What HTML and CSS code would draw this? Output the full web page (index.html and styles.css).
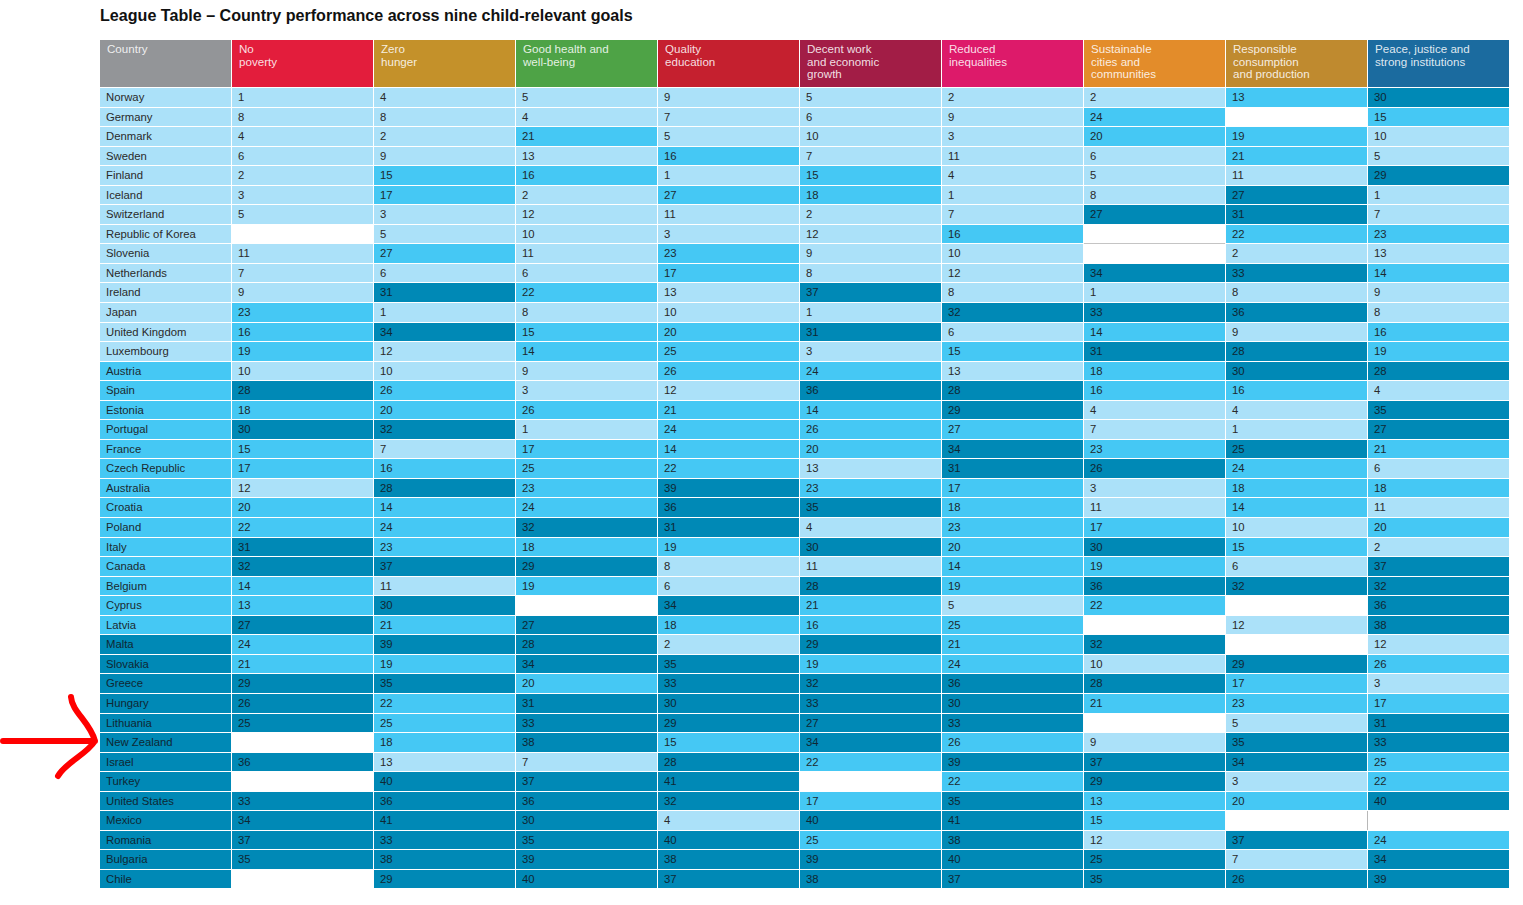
FILE: index.html
```html
<!DOCTYPE html>
<html lang="en">
<head>
<meta charset="utf-8">
<title>League Table</title>
<link rel="stylesheet" href="styles.css">
</head>
<body>
<div class="page">
  <h1 class="title">League Table – Country performance across nine child-relevant goals</h1>
  <div class="table">
    <div class="row head">
      <span class="h0">Country</span>
      <span class="h1">No<br>poverty</span>
      <span class="h2">Zero<br>hunger</span>
      <span class="h3">Good health and<br>well-being</span>
      <span class="h4">Quality<br>education</span>
      <span class="h5">Decent work<br>and economic<br>growth</span>
      <span class="h6">Reduced<br>inequalities</span>
      <span class="h7">Sustainable<br>cities and<br>communities</span>
      <span class="h8">Responsible<br>consumption<br>and production</span>
      <span class="h9">Peace, justice and<br>strong institutions</span>
    </div>
    <div class="row"><span class="l">Norway</span><span class="l">1</span><span class="l">4</span><span class="l">5</span><span class="l">9</span><span class="l">5</span><span class="l">2</span><span class="l">2</span><span class="m">13</span><span class="d">30</span></div>
    <div class="row"><span class="l">Germany</span><span class="l">8</span><span class="l">8</span><span class="l">4</span><span class="l">7</span><span class="l">6</span><span class="l">9</span><span class="m">24</span><span class="w"></span><span class="m">15</span></div>
    <div class="row"><span class="l">Denmark</span><span class="l">4</span><span class="l">2</span><span class="m">21</span><span class="l">5</span><span class="l">10</span><span class="l">3</span><span class="m">20</span><span class="m">19</span><span class="l">10</span></div>
    <div class="row"><span class="l">Sweden</span><span class="l">6</span><span class="l">9</span><span class="l">13</span><span class="m">16</span><span class="l">7</span><span class="l">11</span><span class="l">6</span><span class="m">21</span><span class="l">5</span></div>
    <div class="row"><span class="l">Finland</span><span class="l">2</span><span class="m">15</span><span class="m">16</span><span class="l">1</span><span class="m">15</span><span class="l">4</span><span class="l">5</span><span class="l">11</span><span class="d">29</span></div>
    <div class="row"><span class="l">Iceland</span><span class="l">3</span><span class="m">17</span><span class="l">2</span><span class="m">27</span><span class="m">18</span><span class="l">1</span><span class="l">8</span><span class="d">27</span><span class="l">1</span></div>
    <div class="row"><span class="l">Switzerland</span><span class="l">5</span><span class="l">3</span><span class="l">12</span><span class="l">11</span><span class="l">2</span><span class="l">7</span><span class="d">27</span><span class="d">31</span><span class="l">7</span></div>
    <div class="row"><span class="l">Republic of Korea</span><span class="w"></span><span class="l">5</span><span class="l">10</span><span class="l">3</span><span class="l">12</span><span class="m">16</span><span class="w rule-b"></span><span class="m">22</span><span class="m">23</span></div>
    <div class="row"><span class="l">Slovenia</span><span class="l">11</span><span class="m">27</span><span class="l">11</span><span class="m">23</span><span class="l">9</span><span class="l">10</span><span class="w"></span><span class="l">2</span><span class="l">13</span></div>
    <div class="row"><span class="l">Netherlands</span><span class="l">7</span><span class="l">6</span><span class="l">6</span><span class="m">17</span><span class="l">8</span><span class="l">12</span><span class="d">34</span><span class="d">33</span><span class="m">14</span></div>
    <div class="row"><span class="l">Ireland</span><span class="l">9</span><span class="d">31</span><span class="m">22</span><span class="l">13</span><span class="d">37</span><span class="l">8</span><span class="l">1</span><span class="l">8</span><span class="l">9</span></div>
    <div class="row"><span class="l">Japan</span><span class="m">23</span><span class="l">1</span><span class="l">8</span><span class="l">10</span><span class="l">1</span><span class="d">32</span><span class="d">33</span><span class="d">36</span><span class="l">8</span></div>
    <div class="row"><span class="l">United Kingdom</span><span class="m">16</span><span class="d">34</span><span class="m">15</span><span class="m">20</span><span class="d">31</span><span class="l">6</span><span class="m">14</span><span class="l">9</span><span class="m">16</span></div>
    <div class="row"><span class="l">Luxembourg</span><span class="m">19</span><span class="l">12</span><span class="m">14</span><span class="m">25</span><span class="l">3</span><span class="m">15</span><span class="d">31</span><span class="d">28</span><span class="m">19</span></div>
    <div class="row"><span class="m">Austria</span><span class="l">10</span><span class="l">10</span><span class="l">9</span><span class="m">26</span><span class="m">24</span><span class="l">13</span><span class="m">18</span><span class="d">30</span><span class="d">28</span></div>
    <div class="row"><span class="m">Spain</span><span class="d">28</span><span class="m">26</span><span class="l">3</span><span class="l">12</span><span class="d">36</span><span class="d">28</span><span class="m">16</span><span class="m">16</span><span class="l">4</span></div>
    <div class="row"><span class="m">Estonia</span><span class="m">18</span><span class="m">20</span><span class="m">26</span><span class="m">21</span><span class="m">14</span><span class="d">29</span><span class="l">4</span><span class="l">4</span><span class="d">35</span></div>
    <div class="row"><span class="m">Portugal</span><span class="d">30</span><span class="d">32</span><span class="l">1</span><span class="m">24</span><span class="m">26</span><span class="m">27</span><span class="l">7</span><span class="l">1</span><span class="d">27</span></div>
    <div class="row"><span class="m">France</span><span class="m">15</span><span class="l">7</span><span class="m">17</span><span class="m">14</span><span class="m">20</span><span class="d">34</span><span class="m">23</span><span class="d">25</span><span class="m">21</span></div>
    <div class="row"><span class="m">Czech Republic</span><span class="m">17</span><span class="m">16</span><span class="m">25</span><span class="m">22</span><span class="l">13</span><span class="d">31</span><span class="d">26</span><span class="m">24</span><span class="l">6</span></div>
    <div class="row"><span class="m">Australia</span><span class="l">12</span><span class="d">28</span><span class="m">23</span><span class="d">39</span><span class="m">23</span><span class="m">17</span><span class="l">3</span><span class="m">18</span><span class="m">18</span></div>
    <div class="row"><span class="m">Croatia</span><span class="m">20</span><span class="m">14</span><span class="m">24</span><span class="d">36</span><span class="d">35</span><span class="m">18</span><span class="l">11</span><span class="m">14</span><span class="l">11</span></div>
    <div class="row"><span class="m">Poland</span><span class="m">22</span><span class="m">24</span><span class="d">32</span><span class="d">31</span><span class="l">4</span><span class="m">23</span><span class="m">17</span><span class="l">10</span><span class="m">20</span></div>
    <div class="row"><span class="m">Italy</span><span class="d">31</span><span class="m">23</span><span class="m">18</span><span class="m">19</span><span class="d">30</span><span class="m">20</span><span class="d">30</span><span class="m">15</span><span class="l">2</span></div>
    <div class="row"><span class="m">Canada</span><span class="d">32</span><span class="d">37</span><span class="d">29</span><span class="l">8</span><span class="l">11</span><span class="m">14</span><span class="m">19</span><span class="l">6</span><span class="d">37</span></div>
    <div class="row"><span class="m">Belgium</span><span class="m">14</span><span class="l">11</span><span class="m">19</span><span class="l">6</span><span class="d">28</span><span class="m">19</span><span class="d">36</span><span class="d">32</span><span class="d">32</span></div>
    <div class="row"><span class="m">Cyprus</span><span class="m">13</span><span class="d">30</span><span class="w"></span><span class="d">34</span><span class="m">21</span><span class="l">5</span><span class="m">22</span><span class="w"></span><span class="d">36</span></div>
    <div class="row"><span class="m">Latvia</span><span class="d">27</span><span class="m">21</span><span class="d">27</span><span class="m">18</span><span class="m">16</span><span class="m">25</span><span class="w"></span><span class="l">12</span><span class="d">38</span></div>
    <div class="row"><span class="d">Malta</span><span class="m">24</span><span class="d">39</span><span class="d">28</span><span class="l">2</span><span class="d">29</span><span class="m">21</span><span class="d">32</span><span class="w"></span><span class="l">12</span></div>
    <div class="row"><span class="d">Slovakia</span><span class="m">21</span><span class="m">19</span><span class="d">34</span><span class="d">35</span><span class="m">19</span><span class="m">24</span><span class="l">10</span><span class="d">29</span><span class="m">26</span></div>
    <div class="row"><span class="d">Greece</span><span class="d">29</span><span class="d">35</span><span class="m">20</span><span class="d">33</span><span class="d">32</span><span class="d">36</span><span class="d">28</span><span class="m">17</span><span class="l">3</span></div>
    <div class="row"><span class="d">Hungary</span><span class="d">26</span><span class="m">22</span><span class="d">31</span><span class="d">30</span><span class="d">33</span><span class="d">30</span><span class="m">21</span><span class="m">23</span><span class="m">17</span></div>
    <div class="row"><span class="d">Lithuania</span><span class="d">25</span><span class="m">25</span><span class="d">33</span><span class="d">29</span><span class="d">27</span><span class="d">33</span><span class="w"></span><span class="l">5</span><span class="d">31</span></div>
    <div class="row"><span class="d">New Zealand</span><span class="w"></span><span class="m">18</span><span class="d">38</span><span class="m">15</span><span class="d">34</span><span class="m">26</span><span class="l">9</span><span class="d">35</span><span class="d">33</span></div>
    <div class="row"><span class="d">Israel</span><span class="d">36</span><span class="l">13</span><span class="l">7</span><span class="d">28</span><span class="m">22</span><span class="d">39</span><span class="d">37</span><span class="d">34</span><span class="m">25</span></div>
    <div class="row"><span class="d">Turkey</span><span class="w"></span><span class="d">40</span><span class="d">37</span><span class="d">41</span><span class="w"></span><span class="m">22</span><span class="d">29</span><span class="l">3</span><span class="m">22</span></div>
    <div class="row"><span class="d">United States</span><span class="d">33</span><span class="d">36</span><span class="d">36</span><span class="d">32</span><span class="m">17</span><span class="d">35</span><span class="m">13</span><span class="m">20</span><span class="d">40</span></div>
    <div class="row"><span class="d">Mexico</span><span class="d">34</span><span class="d">41</span><span class="d">30</span><span class="l">4</span><span class="d">40</span><span class="d">41</span><span class="m">15</span><span class="w rule-r"></span><span class="w"></span></div>
    <div class="row"><span class="d">Romania</span><span class="d">37</span><span class="d">33</span><span class="d">35</span><span class="d">40</span><span class="m">25</span><span class="d">38</span><span class="l">12</span><span class="d">37</span><span class="m">24</span></div>
    <div class="row"><span class="d">Bulgaria</span><span class="d">35</span><span class="d">38</span><span class="d">39</span><span class="d">38</span><span class="d">39</span><span class="d">40</span><span class="d">25</span><span class="l">7</span><span class="d">34</span></div>
    <div class="row"><span class="d">Chile</span><span class="w"></span><span class="d">29</span><span class="d">40</span><span class="d">37</span><span class="d">38</span><span class="d">37</span><span class="d">35</span><span class="d">26</span><span class="d">39</span></div>
  </div>
</div>
<svg class="arrow" width="110" height="100" viewBox="0 680 110 100" aria-hidden="true">
  <path d="M3 741 L95 741 M71 697 C72 712 90 722 95 741 C86 755 66 762 58 776" fill="none" stroke="#ff0000" stroke-width="6" stroke-linecap="round" stroke-linejoin="round"/>
</svg>
</body>
</html>
```
FILE: styles.css
```css
html, body {
  margin: 0;
  background: #ffffff;
}

body {
  font-family: "Liberation Sans", Arial, sans-serif;
  color: #222;
  position: relative;
}

.page {
  padding: 5px 0 0 100px;
}

.title {
  margin: 0 0 15px;
  font-size: 16.1px;
  line-height: 20px;
  font-weight: bold;
  color: #111;
}

.table {
  display: flex;
  flex-direction: column;
  gap: 1px;
  width: 1409px;
}

.row {
  display: grid;
  grid-template-columns: 131px repeat(9, 141px);
  column-gap: 1px;
  height: 18.55px;
}

.row > span {
  display: block;
  padding-left: 6px;
  font-size: 11.3px;
  line-height: 18.55px;
  white-space: nowrap;
  overflow: hidden;
}

.row.head {
  height: 47px;
}

.row.head > span {
  padding: 3px 0 0 7px;
  font-size: 11.6px;
  line-height: 12.5px;
  color: rgba(255, 255, 255, 0.86);
}

.h0 { background: #939598; }
.h1 { background: #e31d3c; }
.h2 { background: #c4912a; }
.h3 { background: #4ea346; }
.h4 { background: #c5202f; }
.h5 { background: #a21d46; }
.h6 { background: #dd1a6a; }
.h7 { background: #e38c2a; }
.h8 { background: #bf8a2f; }
.h9 { background: #1b6b9f; }

.l { background: #abe1f9; color: #2a2a2a; }
.m { background: #45c8f4; color: #1c2a30; }
.d { background: #0089b6; color: #0f2733; }
.w { background: #ffffff; }

.rule-b { box-shadow: 0 1px 0 #c4c4c4; }
.rule-r { box-shadow: 1px 0 0 #b8b8b8; }

.arrow {
  position: absolute;
  left: 0;
  top: 680px;
}
```
